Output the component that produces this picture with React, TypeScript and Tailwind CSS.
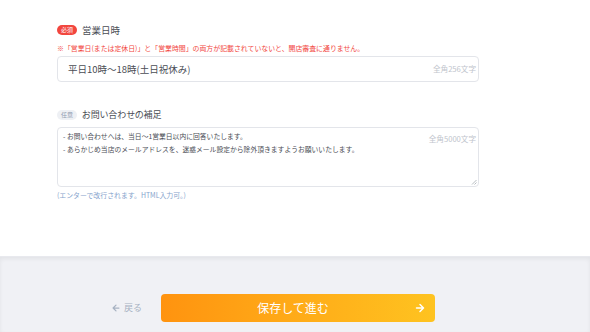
import React from "react";

export default function App() {
  const font = { fontFamily: '"Noto Sans CJK JP", "Noto Sans", sans-serif' };
  return (
    <div className="w-[590px] h-[332px] flex flex-col bg-white overflow-hidden" style={font}>
      <div className="h-[256px] bg-white px-[57px] pt-[24px] flex flex-col">
        <div className="w-[422px] flex flex-col">
          <div className="flex items-center gap-[5px] h-[12px]">
            <span className="h-[10px] px-[4px] rounded-full bg-[#f2463e] text-white text-[6px] leading-[10px] flex items-center">必須</span>
            <span className="text-[9.5px] leading-[12px] text-[#4a4d55]">営業日時</span>
          </div>
          <div className="mt-[7px] text-[6.9px] leading-[10px] text-[#f2463e]">
            ※「営業日(または定休日)」と「営業時間」の両方が記載されていないと、開店審査に通りません。
          </div>
          <div className="mt-[3px] h-[26px] border border-[#e3e5ea] rounded-[4px] flex items-center justify-between pl-[10px] pr-[2px]">
            <span className="text-[9.5px] text-[#4a4d55]">平日10時〜18時(土日祝休み)</span>
            <span className="text-[7.6px] text-[#c0c4cc]">全角256文字</span>
          </div>
          <div className="mt-[27px] flex items-center gap-[5px] h-[12px]">
            <span className="h-[10px] px-[4px] rounded-full bg-[#eef0f4] text-[#8e9bb0] text-[6px] leading-[10px] flex items-center">任意</span>
            <span className="text-[9px] leading-[12px] text-[#4a4d55]" style={{ fontFeatureSettings: '"palt"' }}>お問い合わせの補足</span>
          </div>
          <div className="mt-[6px] h-[60px] border border-[#e3e5ea] rounded-[4px] relative flex">
            <div className="flex-1 pl-[5px] pt-[2px] text-[6.8px] leading-[13px] text-[#4a4d55]">
              <div>- お問い合わせへは、当日〜1営業日以内に回答いたします。</div>
              <div>- あらかじめ当店のメールアドレスを、迷惑メール設定から除外頂きますようお願いいたします。</div>
            </div>
            <span className="pt-[6px] pr-[2px] text-[7.6px] leading-[10px] text-[#c0c4cc]">全角5000文字</span>
            <svg className="absolute right-[1px] bottom-[1px]" width="6" height="6" viewBox="0 0 6 6">
              <path d="M5.5 1 L1 5.5 M5.5 3.5 L3.5 5.5" stroke="#9aa0a8" strokeWidth="0.7" />
            </svg>
          </div>
          <div className="mt-[3px] text-[6.9px] leading-[10px] text-[#86a3cc]">(エンターで改行されます。HTML入力可。)</div>
        </div>
      </div>
      <div className="flex-1 bg-[#f0f1f5] shadow-[inset_0_2px_4px_rgba(0,0,0,0.06)] border-t border-[#e8e9ee] flex items-start pt-[37px]">
        <div className="ml-[111px] w-[40px] h-[28px] flex items-center gap-[3px] text-[#a7b2c2]">
          <svg width="10" height="10" viewBox="0 0 24 24" fill="none" stroke="currentColor" strokeWidth="3" strokeLinecap="round" strokeLinejoin="round">
            <path d="M19 12H5M12 19l-7-7 7-7" />
          </svg>
          <span className="text-[9px]">戻る</span>
        </div>
        <div className="ml-[10px] w-[274px] h-[28px] rounded-[4px] bg-gradient-to-r from-[#ff930f] to-[#fec320] flex items-center relative">
          <span className="flex-1 text-center text-white text-[12px] pr-[10px]">保存して進む</span>
          <svg className="absolute right-[9px]" width="12" height="12" viewBox="0 0 24 24" fill="none" stroke="white" strokeWidth="3" strokeLinecap="round" strokeLinejoin="round">
            <path d="M5 12h14M12 5l7 7-7 7" />
          </svg>
        </div>
      </div>
    </div>
  );
}
